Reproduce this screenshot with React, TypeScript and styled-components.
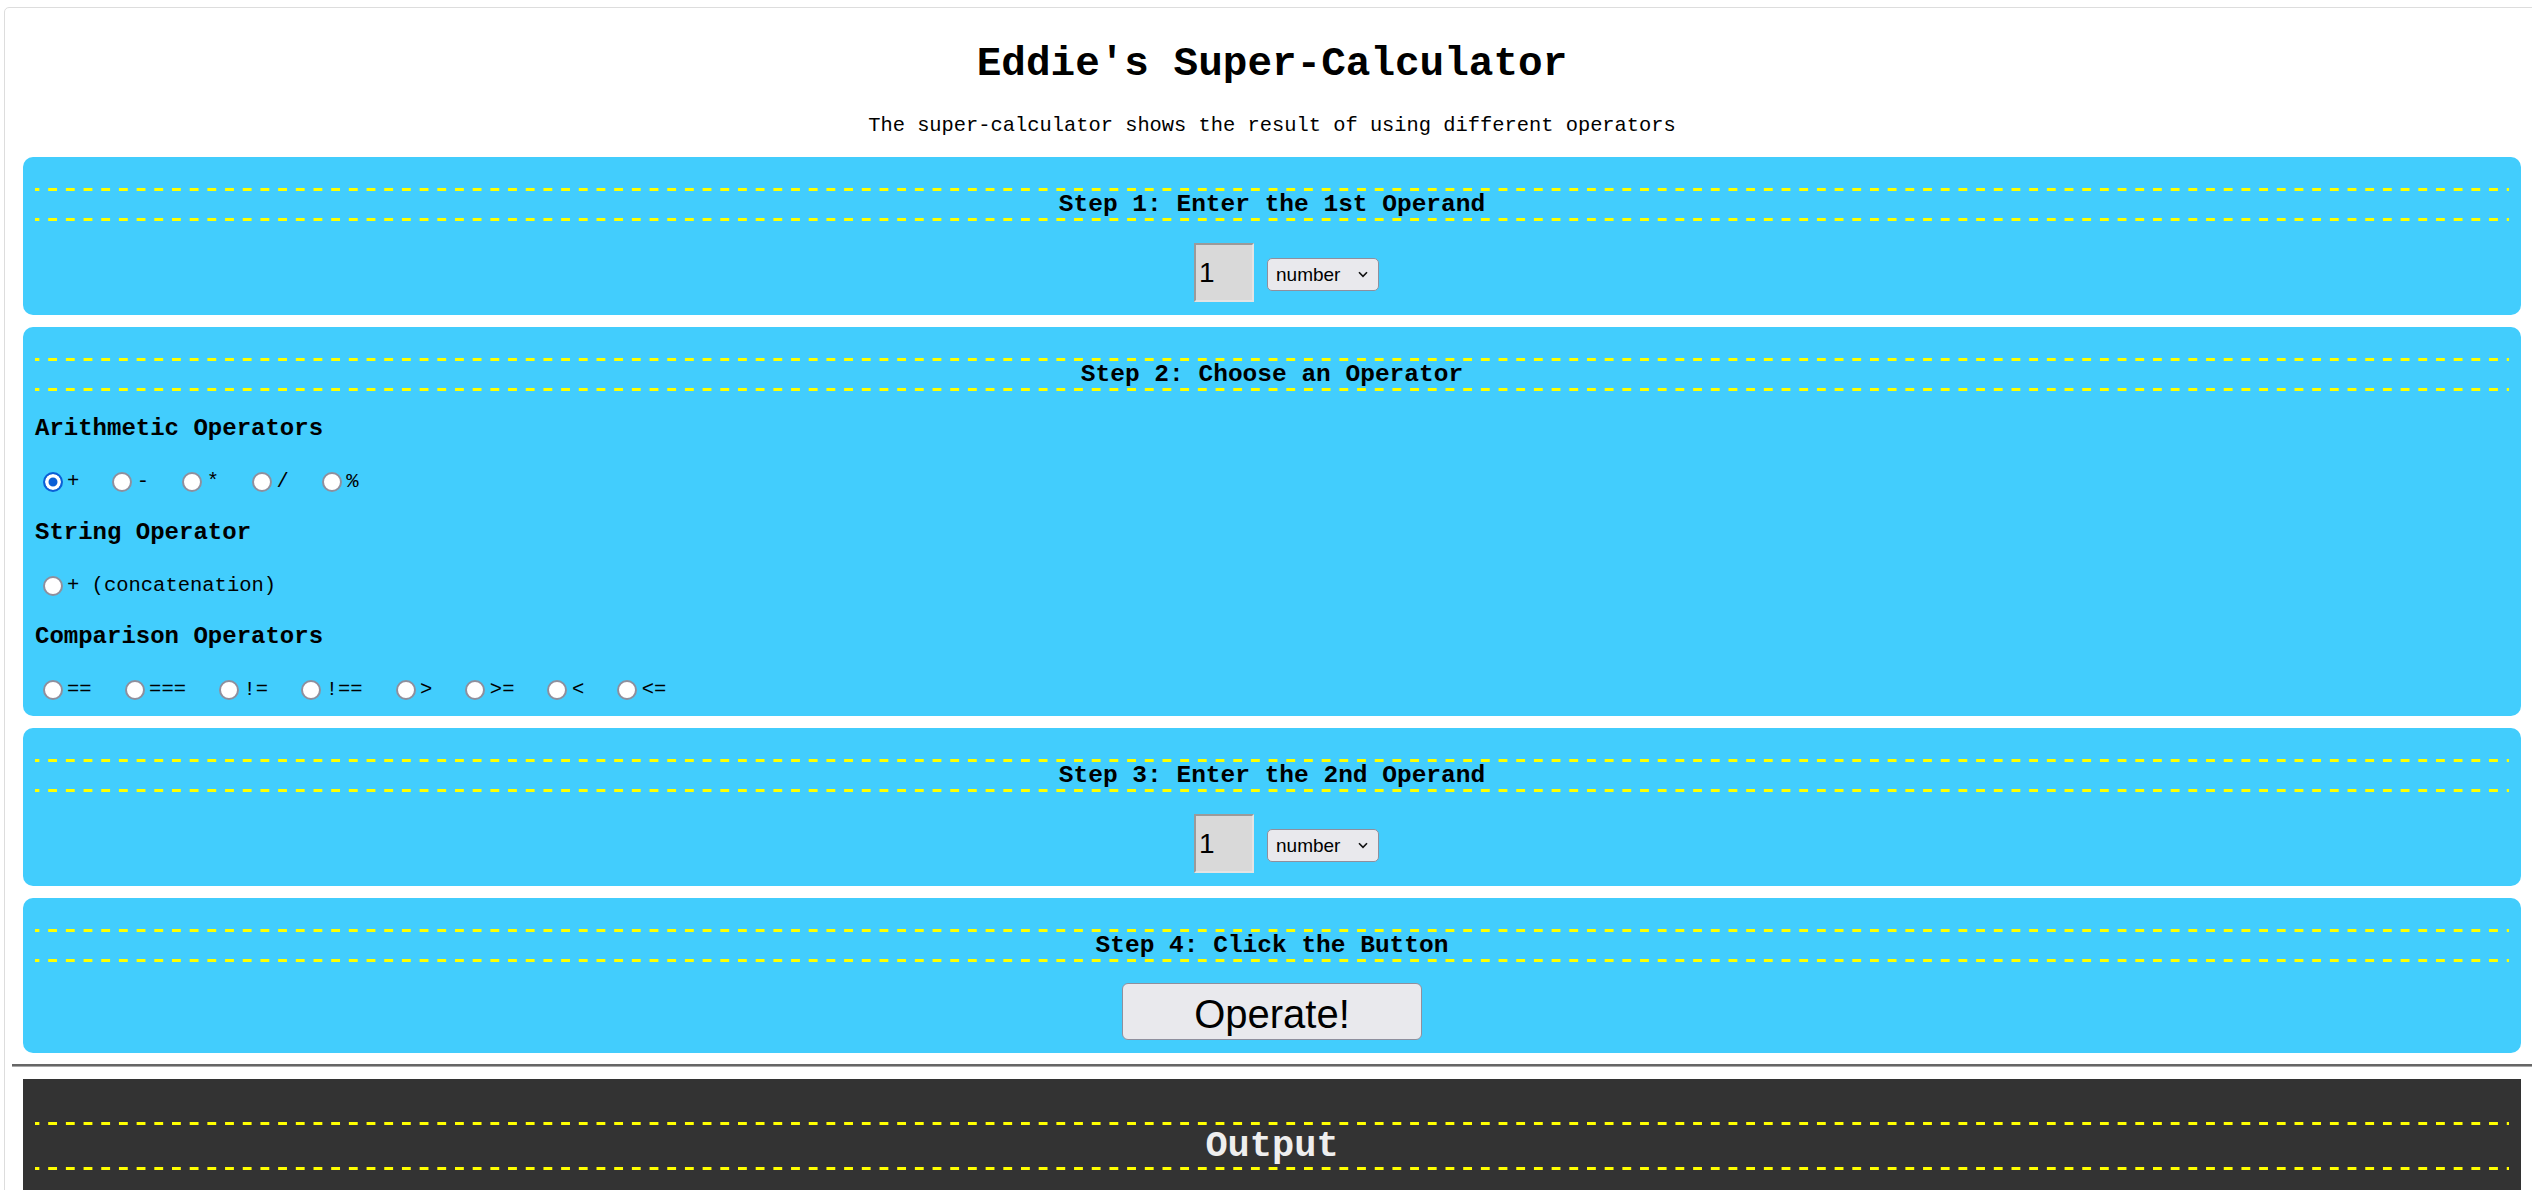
import React, { useState } from 'react';
import styled, { createGlobalStyle, css } from 'styled-components';

const GlobalStyle = createGlobalStyle`
    html, body {
        margin: 0;
        padding: 0;
        overflow: hidden;
        background: #ffffff;
    }
    body {
        font-family: 'Courier New', 'Liberation Mono', monospace;
        color: #000;
    }
`;

// yellow dashed rule above and below a heading: 9px dash, ~9px gap, 3px thick
const dashedRules = css`
    padding: 3px 0;
    background-image:
        linear-gradient(to right, #ffff00 50%, transparent 50%),
        linear-gradient(to right, #ffff00 50%, transparent 50%);
    background-size: 17.7px 3px, 17.7px 3px;
    background-position: -4.5px top, -4.5px bottom;
    background-repeat: repeat-x;
`;

const Page = styled.div`
    box-sizing: border-box;
    width: 2536px;
    margin: 7px 0 0 4px;
    padding: 0 18px;
    border: 1px solid #dddddd;
    border-radius: 5px;
`;

const Title = styled.h1`
    margin: 32.5px 0 0;
    font-size: 41px;
    font-weight: bold;
    line-height: normal;
    text-align: center;
`;

const Subtitle = styled.p`
    margin: 27.5px 0 0;
    font-size: 20.4px;
    line-height: normal;
    text-align: center;
`;

const Panel = styled.section`
    display: flow-root;
    background: #42cdfd;
    border-radius: 10px;
    padding: 0 12px 13px;
    margin-top: 20px;

    & + & {
        margin-top: 12px;
    }
`;

const StepHeading = styled.h3`
    ${dashedRules};
    margin: 31px 0 0;
    font-size: 24.5px;
    font-weight: bold;
    line-height: 27px;
    text-align: center;
`;

const InputRow = styled.div`
    display: flex;
    justify-content: center;
    align-items: flex-start;
    gap: 13px;
    padding-left: 29px;
    margin-top: 22px;
`;

const NumberInput = styled.input`
    box-sizing: border-box;
    width: 60px;
    height: 59px;
    margin: 0;
    padding: 0 0 0 3px;
    background: #d9d9d9;
    border: 2px solid;
    border-color: #9a9a9a #e4e4e4 #e4e4e4 #9a9a9a;
    font-family: 'Liberation Sans', Arial, sans-serif;
    font-size: 28px;
    color: #000;
    outline: none;
`;

const SelectWrap = styled.div`
    position: relative;
    margin-top: 15px;
`;

const TypeSelect = styled.select`
    appearance: none;
    box-sizing: border-box;
    width: 112px;
    height: 33px;
    margin: 0;
    padding: 0 0 0 8px;
    background: #e9e9ed;
    border: 1px solid #8f8f9d;
    border-radius: 5px;
    font-family: 'Liberation Sans', Arial, sans-serif;
    font-size: 19px;
    color: #000;
`;

const Chevron = styled.svg`
    position: absolute;
    right: 11px;
    top: 13px;
    pointer-events: none;
`;

const SubHeading = styled.h4`
    margin: 23.5px 0 0;
    font-size: 24px;
    font-weight: bold;
    line-height: 27px;
`;

const OptionRow = styled.div`
    display: flex;
    align-items: center;
    height: 27px;
    margin-top: 26.5px;
`;

const Radio = styled.input`
    appearance: none;
    box-sizing: border-box;
    width: 20px;
    height: 20px;
    margin: 0 4.5px 0 7.5px;
    border-radius: 50%;
    border: 2.5px solid #8f8f9d;
    background: #ffffff;

    &:checked {
        border-color: #0b5fd6;
        background: #0b5fd6;
        box-shadow: inset 0 0 0 3.5px #ffffff;
    }
`;

const OptionLabel = styled.label`
    font-size: 20.5px;
    line-height: 27px;
    margin-right: 25.5px;
    white-space: pre;
`;

const ButtonRow = styled.div`
    display: flex;
    justify-content: center;
    margin-top: 20.5px;
`;

const OperateButton = styled.button`
    box-sizing: border-box;
    width: 300px;
    height: 57px;
    padding: 6px 0 0;
    background: #e9e9ed;
    border: 1px solid #8f8f9d;
    border-radius: 6px;
    font-family: 'Liberation Sans', Arial, sans-serif;
    font-size: 40px;
    color: #000;
`;

const Divider = styled.hr`
    height: 0;
    margin: 11.5px -11.5px 0;
    border: 0;
    border-top: 2px solid #666666;
    border-bottom: 1px solid #a8a8a8;
`;

const OutputPanel = styled.section`
    display: flow-root;
    min-height: 400px;
    background: #333333;
    margin-top: 12px;
    padding: 0 12px 60px;
`;

const OutputHeading = styled.h2`
    ${dashedRules};
    margin: 42.5px 0 0;
    font-size: 37px;
    font-weight: bold;
    line-height: 42px;
    color: #eeeeee;
    text-align: center;
`;

const arithmetic = ['+', '-', '*', '/', '%'];
const comparison = ['==', '===', '!=', '!==', '>', '>=', '<', '<='];

function OperandInput({ name }: { name: string }) {
    return (
        <InputRow>
            <NumberInput name={name} defaultValue="1" />
            <SelectWrap>
                <TypeSelect defaultValue="number">
                    <option value="number">number</option>
                    <option value="string">string</option>
                    <option value="boolean">boolean</option>
                </TypeSelect>
                <Chevron width="10" height="7" viewBox="0 0 10 7">
                    <path d="M1 1.2 L5 5.4 L9 1.2" fill="none" stroke="#111" strokeWidth="1.6" />
                </Chevron>
            </SelectWrap>
        </InputRow>
    );
}

export default function App() {
    const [op, setOp] = useState('+');

    const renderOption = (label: string, key: string) => (
        <React.Fragment key={key}>
            <Radio
                type="radio"
                name="operator"
                id={key}
                checked={op === key}
                onChange={() => setOp(key)}
            />
            <OptionLabel htmlFor={key}>{label}</OptionLabel>
        </React.Fragment>
    );

    return (
        <>
            <GlobalStyle />
            <Page>
                <Title>Eddie's Super-Calculator</Title>
                <Subtitle>The super-calculator shows the result of using different operators</Subtitle>

                <Panel>
                    <StepHeading>Step 1: Enter the 1st Operand</StepHeading>
                    <OperandInput name="first" />
                </Panel>

                <Panel>
                    <StepHeading>Step 2: Choose an Operator</StepHeading>
                    <SubHeading>Arithmetic Operators</SubHeading>
                    <OptionRow>{arithmetic.map((o) => renderOption(o, o))}</OptionRow>
                    <SubHeading>String Operator</SubHeading>
                    <OptionRow>{renderOption('+ (concatenation)', 'concat')}</OptionRow>
                    <SubHeading>Comparison Operators</SubHeading>
                    <OptionRow>{comparison.map((o) => renderOption(o, o))}</OptionRow>
                </Panel>

                <Panel>
                    <StepHeading>Step 3: Enter the 2nd Operand</StepHeading>
                    <OperandInput name="second" />
                </Panel>

                <Panel>
                    <StepHeading>Step 4: Click the Button</StepHeading>
                    <ButtonRow>
                        <OperateButton type="button">Operate!</OperateButton>
                    </ButtonRow>
                </Panel>

                <Divider />

                <OutputPanel>
                    <OutputHeading>Output</OutputHeading>
                </OutputPanel>
            </Page>
        </>
    );
}
